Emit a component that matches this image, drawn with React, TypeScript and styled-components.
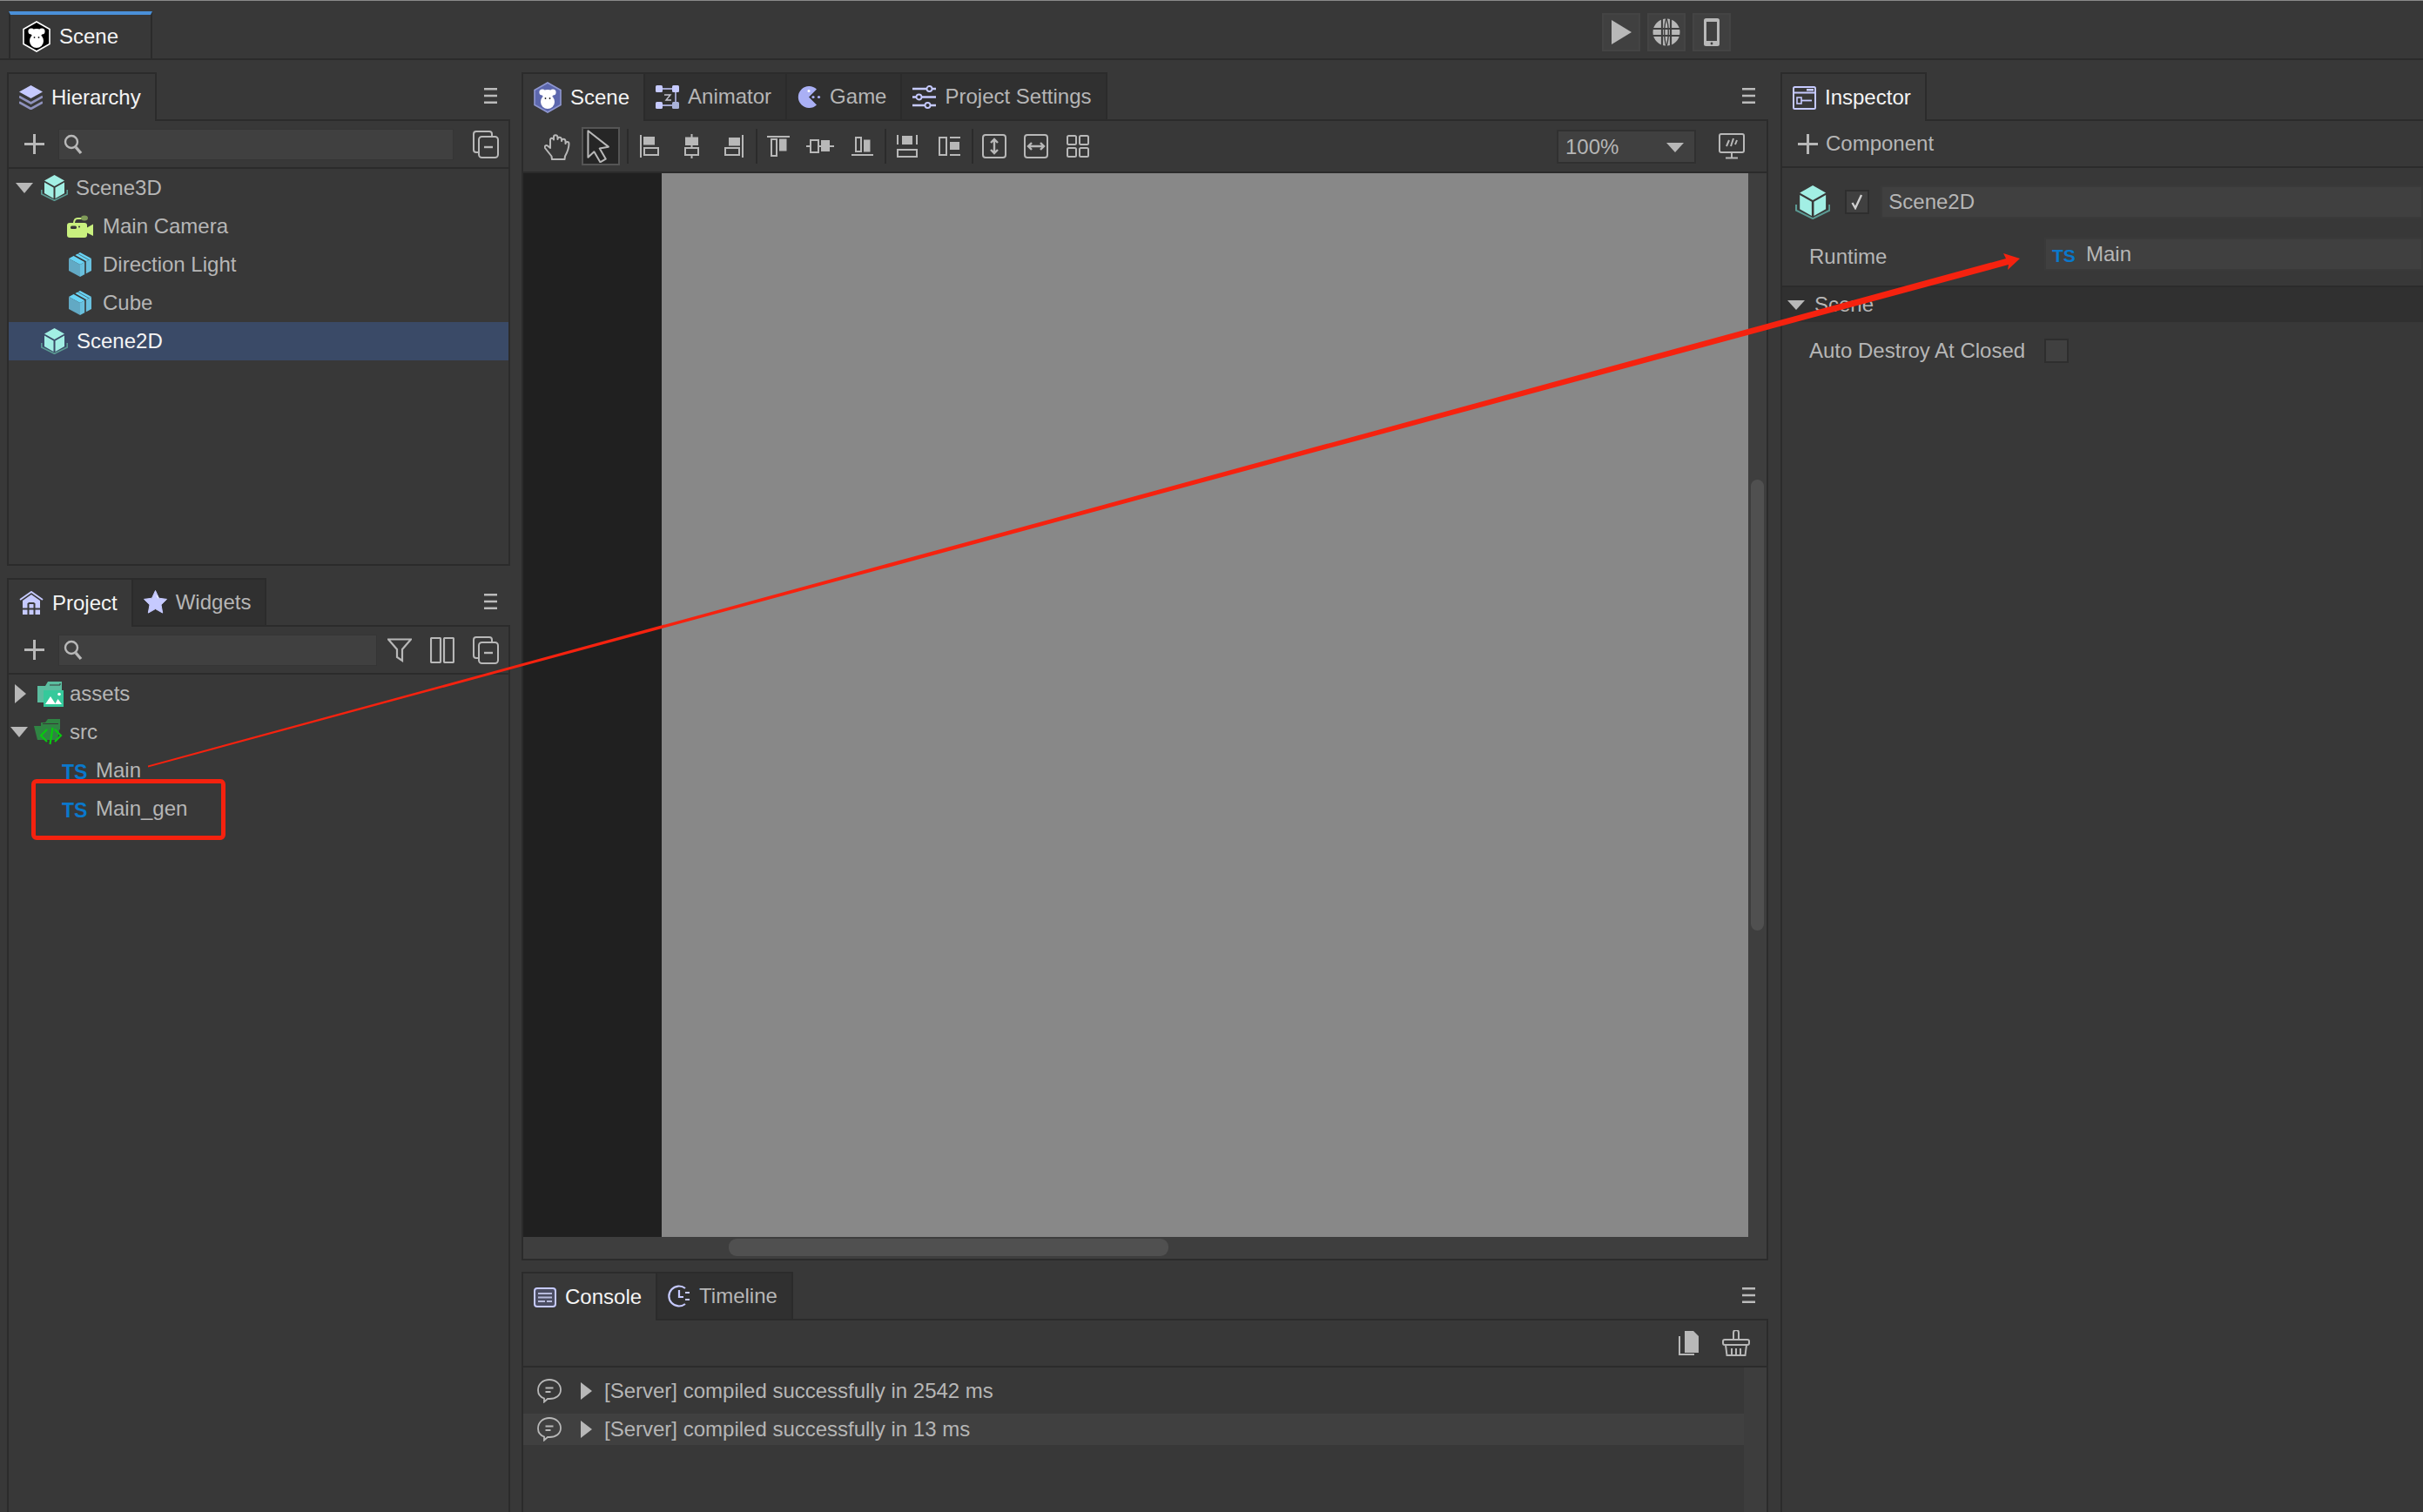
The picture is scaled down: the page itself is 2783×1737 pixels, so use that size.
import React from "react";
import styled, { createGlobalStyle } from "styled-components";

const C = { bg: "#383838", line: "#2b2b2b", text: "#b6b6b6", white: "#f4f4f4", field: "#404040", icon: "#b8b8b8", peri: "#c6caff", tabOff: "#303030" };

const Global = createGlobalStyle`
  html, body { margin: 0; padding: 0; background: ${C.bg}; overflow: hidden; }
  #root { width: 2783px; height: 1737px; }
  * { box-sizing: border-box; }
`;

const Page = styled.div`
  position: relative; width: 2783px; height: 1737px; overflow: hidden; display: flex; flex-direction: column;
  background: ${C.bg}; color: ${C.text}; font: 24px/28px "Liberation Sans", Arial, sans-serif;
  border-top: 1px solid #8a8a8a;
`;
const TopBar = styled.header`
  height: 68px; flex: none; display: flex; align-items: flex-start; padding: 12px 0 0 10px; border-bottom: 2px solid ${C.line};
`;
const DocTab = styled.div`
  width: 165px; height: 54px; display: flex; align-items: center; gap: 10px; padding-left: 14px; color: ${C.white};
  border-left: 2px solid ${C.line}; border-right: 2px solid ${C.line}; border-top: 4px solid #4a90d9;
`;
const PlayGroup = styled.div`display: flex; gap: 8px; margin: 2px 0 0 1665px;`;
const PlayBtn = styled.div`
  width: 44px; height: 44px; display: flex; align-items: center; justify-content: center; background: #404040; border: 2px solid #444;
`;
const Main = styled.main`flex: 1; min-height: 0; display: flex; padding: 14px 0 0 8px; gap: 13px;`;
const LeftCol = styled.div`width: 578px; flex: none; display: flex; flex-direction: column; gap: 14px;`;
const CenterCol = styled.div`width: 1432px; flex: none; display: flex; flex-direction: column; gap: 13px;`;
const RightCol = styled.div`flex: 1; min-width: 0; display: flex; flex-direction: column; margin-left: 1px;`;
const Panel = styled.section<{ $h?: number }>`
  display: flex; flex-direction: column; min-height: 0; ${(p) => (p.$h ? `height: ${p.$h}px; flex: none;` : "flex: 1;")}
`;
const PanelHead = styled.div`height: 54px; flex: none; display: flex; align-items: stretch; position: relative;`;
const PanelBody = styled.div<{ $open?: boolean }>`
  flex: 1; min-height: 0; display: flex; flex-direction: column; border: 2px solid ${C.line};
  ${(p) => (p.$open ? "border-bottom: none;" : "")}
`;
const Tab = styled.div<{ $active?: boolean }>`
  display: flex; align-items: center; gap: 10px; padding: 0 16px 0 12px; white-space: nowrap;
  border: 2px solid ${C.line}; border-bottom: none; position: relative;
  & + & { margin-left: -2px; }
  color: ${(p) => (p.$active ? C.white : C.text)};
  background: ${(p) => (p.$active ? C.bg : C.tabOff)};
  ${(p) => (p.$active ? `z-index: 1; margin-bottom: -2px;` : "")}
`;
const MenuWrap = styled.div`margin-left: auto; margin-right: 15px; align-self: center; display: flex;`;
const ToolRow = styled.div`
  height: 55px; flex: none; display: flex; align-items: center; border-bottom: 2px solid ${C.line}; position: relative;
`;
const PlusSlot = styled.div<{ $w: number }>`width: ${(p) => p.$w}px; display: flex; justify-content: center; flex: none;`;
const Search = styled.div<{ $w: number }>`
  width: ${(p) => p.$w}px; height: 34px; flex: none; display: flex; align-items: center; padding-left: 5px; background: ${C.field};
  box-shadow: 0 0 0 1px #353535;
`;
const ToolEnd = styled.div`margin-left: auto; margin-right: 11px; display: flex; align-items: center; gap: 21px;`;
const Tree = styled.div`display: flex; flex-direction: column; padding-top: 0;`;
const TreeRow = styled.div<{ $indent: number; $gap: number; $sel?: boolean }>`
  height: 44px; flex: none; display: flex; align-items: center; padding-left: ${(p) => p.$indent}px; gap: ${(p) => p.$gap}px;
  ${(p) => (p.$sel ? `background: #3a4a67; color: ${C.white};` : "")}
`;
const TsMark = styled.span<{ $size?: number }>`
  font: bold ${(p) => p.$size ?? 23}px/28px "Liberation Sans", Arial, sans-serif; color: #0a78cc; display: inline-block; width: 29px; position: relative; top: 2px;
`;
const SceneBar = styled(ToolRow)`height: 60px; padding-left: 15px; flex: none;`;
const Slot = styled.div`width: 48px; height: 44px; flex: none; display: flex; align-items: center; justify-content: center;`;
const ActiveSlot = styled.div`
  width: 44px; height: 44px; flex: none; margin: 0 6px 0 4px; display: flex; align-items: center; justify-content: center;
  background: #262626; border: 2px solid #555;
`;
const Sep = styled.div`width: 2px; height: 40px; flex: none; background: ${C.line}; margin-left: 2px;`;
const ZoomBox = styled.div`
  width: 160px; height: 39px; flex: none; margin-left: auto; display: flex; align-items: center; justify-content: space-between;
  padding: 2px 12px 0 8px; background: ${C.field}; border: 2px solid #303030;
`;
const MonitorSlot = styled.div`width: 81px; flex: none; display: flex; justify-content: center; padding-right: 0;`;
const ViewWrap = styled.div`flex: 1; min-height: 0; display: grid; grid-template-columns: 159px 1248px 1fr; grid-template-rows: 1fr 25px;`;
const DarkGutter = styled.div`background: #202020;`;
const Canvas = styled.div`background: #888888;`;
const VTrack = styled.div`grid-row: 1 / 3; grid-column: 3; background: #3e3e3e; padding: 352px 3px 0 3px;`;
const VThumb = styled.div`height: 518px; background: #505050; border-radius: 9px;`;
const HTrack = styled.div`grid-column: 1 / 3; background: #3e3e3e; padding: 2px 0 3px 236px;`;
const HThumb = styled.div`width: 505px; height: 100%; background: #505050; border-radius: 9px;`;
const ConsoleTools = styled(ToolRow)`height: 54px; justify-content: flex-end; padding-right: 19px; gap: 26px;`;
const ConsoleArea = styled.div`flex: 1; display: flex; min-height: 0;`;
const ConsoleList = styled.div`flex: 1; min-width: 0; padding-top: 9px;`;
const ConsoleStrip = styled.div`width: 26px; flex: none; background: #3d3d3d;`;
const LogRow = styled.div<{ $hi?: boolean }>`
  height: 36px; display: flex; align-items: center; padding-left: 16px; gap: 22px; position: relative;
  & + & { margin-top: 8px; }
  background: ${(p) => (p.$hi ? "#404040" : "transparent")};
`;
const LogTail = styled.div`display: flex; align-items: center; gap: 14px;`;
const InspectBody = styled.div`flex: 1; display: flex; flex-direction: column; border-left: 2px solid ${C.line}; border-top: 2px solid ${C.line};`;
const CompRow = styled.div`height: 54px; flex: none; display: flex; align-items: center; gap: 9px; padding-left: 18px; border-bottom: 2px solid ${C.line};`;
const NameRow = styled.div`display: flex; align-items: center; height: 38px; margin-top: 20px; padding-left: 15px;`;
const Check = styled.div<{ $mr?: number }>`
  width: 28px; height: 28px; flex: none; margin-right: ${(p) => p.$mr ?? 0}px; display: flex; align-items: center; justify-content: center;
  background: #404040; border: 2px solid #2e2e2e;
`;
const Field = styled.div`
  flex: 1; min-width: 0; height: 38px; display: flex; align-items: center; padding-left: 7px; gap: 10px; background: ${C.field}; border: 2px solid #3a3a3a;
`;
const PropRow = styled.div`display: flex; align-items: center; height: 39px; margin-top: 21px; padding: 0 0 0 31px;`;
const PropLabel = styled.div`width: 270px; flex: none; position: relative; top: 3px;`;
const Section = styled.div`
  height: 42px; margin-top: 17px; flex: none; display: flex; align-items: center; gap: 11px; padding-left: 6px; background: #303030; border-top: 2px solid ${C.line};
`;
const AutoRow = styled.div`display: flex; align-items: center; height: 28px; margin-top: 19px; padding-left: 31px;`;
const AutoLabel = styled.div`width: 270px; flex: none; white-space: nowrap;`;
const Annot = styled.svg`position: absolute; left: 0; top: 0; pointer-events: none;`;
const RedBox = styled.div`
  position: absolute; left: 36px; top: 894px; width: 223px; height: 70px; border: 5px solid #f5220f; border-radius: 6px; pointer-events: none;
`;

const g = C.icon;
const p = C.peri;

const Tri = ({ dir, w, h, c = g }: { dir: "d" | "r"; w: number; h: number; c?: string }) => (
  <svg width={w} height={h} viewBox="0 0 20 20" preserveAspectRatio="none" style={{ flex: "none" }}>
    <polygon points={dir === "d" ? "0,0 20,0 10,20" : "0,0 20,10 0,20"} fill={c} />
  </svg>
);
const Menu = () => (
  <svg width="15" height="18" viewBox="0 0 15 18"><path d="M0 1.3h15M0 9h15M0 16.7h15" stroke="#bbb" strokeWidth="2.6" /></svg>
);
const Plus = ({ s = 23 }: { s?: number }) => (
  <svg width={s} height={s} viewBox="0 0 23 23"><path d="M11.5 0v23M0 11.5h23" stroke={g} strokeWidth="3" /></svg>
);
const Mag = () => (
  <svg width="22" height="24" viewBox="0 0 22 24" fill="none" stroke={g}>
    <circle cx="9" cy="9" r="7" strokeWidth="2.4" /><path d="M14 15l6 7" strokeWidth="3.4" />
  </svg>
);
const Collapse = () => (
  <svg width="30" height="32" viewBox="0 0 30 32" fill="none" stroke={g} strokeWidth="2">
    <path d="M6 25H4a3 3 0 0 1-3-3V4a3 3 0 0 1 3-3h15a3 3 0 0 1 3 3v3" />
    <rect x="7" y="7" width="22" height="24" rx="3.5" /><path d="M13 19h10" strokeWidth="2.4" />
  </svg>
);
const Filter = () => (
  <svg width="28" height="28" viewBox="0 0 28 28" fill="none" stroke={g} strokeWidth="2.2">
    <path d="M1 1.5h26L17 13v13l-6-4v-9z" />
  </svg>
);
const Columns = () => (
  <svg width="28" height="30" viewBox="0 0 28 30" fill="none" stroke={g} strokeWidth="2.2">
    <rect x="1" y="1" width="11" height="28" rx="1" /><rect x="16" y="1" width="11" height="28" rx="1" />
  </svg>
);
const Monkey = ({ hex, line }: { hex: string; line: string }) => (
  <svg width="32" height="36" viewBox="0 0 32 36" style={{ flex: "none" }}>
    <polygon points="16,1 31,9.5 31,26.5 16,35 1,26.5 1,9.5" fill={hex} stroke={line} strokeWidth="1.6" />
    <circle cx="10" cy="12" r="3.6" fill="#fff" /><circle cx="22" cy="12" r="3.6" fill="#fff" />
    <ellipse cx="16" cy="14" rx="6.5" ry="5" fill="#fff" /><ellipse cx="16" cy="23" rx="8" ry="8" fill="#fff" />
    <circle cx="13.5" cy="19" r=".9" fill="#222" /><circle cx="18.5" cy="19" r=".9" fill="#222" />
  </svg>
);
const Layers = () => (
  <svg width="27" height="28" viewBox="0 0 27 28">
    <path d="M13.5 0L27 7.5 13.5 15 0 7.5z" fill={p} />
    <path d="M0 13l13.5 7.5L27 13M0 19.5L13.5 27 27 19.5" fill="none" stroke="#8f92bd" strokeWidth="2.6" />
  </svg>
);
const Home = () => (
  <svg width="28" height="28" viewBox="0 0 28 28">
    <path d="M1 10L14 1l13 9" fill="none" stroke={p} strokeWidth="2" />
    <path d="M4 11l10-7 10 7v16H4z" fill={p} />
    <path d="M10.5 14v13M17.5 14v13M4 20.5h20M10.5 14h7" stroke="#383838" strokeWidth="2" fill="none" />
  </svg>
);
const Star = () => (
  <svg width="27" height="28" viewBox="0 0 27 28">
    <path d="M13.5 0.5l4 8.7 9 1.2-6.5 6.4 1.7 9.3-8.2-4.6-8.2 4.6L7 16.8.5 10.4l9-1.2z" fill={p} stroke={p} strokeLinejoin="round" />
    <path d="M15 6l2 3.5" stroke="#fff" strokeWidth="1" />
  </svg>
);
const Animator = () => (
  <svg width="27" height="27" viewBox="0 0 27 27">
    <rect x="0" y="0" width="8" height="8" rx="1.5" fill={p} /><rect x="19" y="0" width="8" height="8" rx="1.5" fill={p} />
    <rect x="0" y="19" width="8" height="8" rx="1.5" fill={p} /><rect x="19" y="19" width="8" height="8" rx="1.5" fill="#aab3d8" />
    <path d="M8 4h11M8 23h11M23 8v11" stroke={p} strokeWidth="1.4" />
    <path d="M10 11h7l-5 6h6" fill="none" stroke="#c4c4d0" strokeWidth="1.4" />
  </svg>
);
const Pac = () => (
  <svg width="27" height="27" viewBox="0 0 27 27">
    <path d="M22 4.5A12.5 12.5 0 1 0 22 22.5L13 13.5z" fill="#aab0f5" />
    <circle cx="13" cy="6.5" r="1.5" fill="#fff" /><circle cx="18" cy="13.5" r="1.6" fill="#aab0f5" /><circle cx="24.5" cy="13.5" r="1.6" fill="#aab0f5" />
  </svg>
);
const Sliders = () => (
  <svg width="27" height="27" viewBox="0 0 27 27" fill="none" stroke={p} strokeWidth="2.4">
    <path d="M0 4h16M23 4h4M0 13.5h4M11 13.5h16M0 23h14M21 23h6" /><circle cx="19.5" cy="4" r="3" strokeWidth="1.8" /><circle cx="7.5" cy="13.5" r="3" strokeWidth="1.8" /><circle cx="17.5" cy="23" r="3" strokeWidth="1.8" />
  </svg>
);
const InspectIco = () => (
  <svg width="27" height="27" viewBox="0 0 27 27" fill="none">
    <rect x="1" y="1" width="25" height="25" rx="1.5" stroke={p} strokeWidth="2" /><path d="M1 7.5h25" stroke={p} strokeWidth="2" />
    <path d="M16 3h8v2.5h-8z" fill={p} /><rect x="5" y="13" width="5" height="7" stroke={p} strokeWidth="1.6" /><path d="M10 16.5h12" stroke={p} strokeWidth="1.8" />
  </svg>
);
const ConsoleIco = () => (
  <svg width="26" height="23" viewBox="0 0 26 23">
    <rect x="1" y="1" width="24" height="21" rx="3" fill="#4b4d62" stroke={p} strokeWidth="2" />
    <path d="M5 7h16M5 11.5h16M5 16h8M15 16h6" stroke="#b8bbdc" strokeWidth="2" />
  </svg>
);
const Clock = () => (
  <svg width="26" height="26" viewBox="0 0 26 26" fill="none" stroke={p} strokeWidth="2.2">
    <path d="M20 4A11.5 11.5 0 1 0 20 22" /><path d="M13 6v8h5M20 9h5M20 17h5" />
  </svg>
);
const Cube = ({ s = 1 }: { s?: number }) => (
  <svg width={31 * s} height={30 * s} viewBox="0 0 31 30" style={{ flex: "none" }}>
    <polygon points="15.5,0 27,6.5 15.5,13 4,6.5" fill="#a2efe4" />
    <polygon points="4,8.5 14.5,14.5 14.5,27 4,21" fill="#a2efe4" /><polygon points="27,8.5 16.5,14.5 16.5,27 27,21" fill="#a2efe4" />
    <polyline points="0.8,17 0.8,22 15.5,29.3 30.2,22 30.2,17" fill="none" stroke="#5b9a93" strokeWidth="1.6" />
  </svg>
);
const Box = () => (
  <svg width="26" height="28" viewBox="0 0 26 28" style={{ flex: "none" }}>
    <polygon points="13,0 26,7 13,14 0,7" fill="#69d4f5" /><polygon points="0,7 13,14 13,28 0,21" fill="#62a9c4" /><polygon points="26,7 13,14 13,28 26,21" fill="#69c0de" />
    <path d="M6 3.2L19 10.5V25" fill="none" stroke="#383838" strokeWidth="1.6" /><path d="M10 1.2l13 7.3" stroke="#383838" strokeWidth=".6" />
  </svg>
);
const Camera = () => (
  <svg width="30" height="27" viewBox="0 0 30 27" style={{ flex: "none" }}>
    <rect x="0" y="9" width="23" height="17" rx="3" fill="#c9f07f" /><polygon points="22,15 30,10.5 30,24 22,20" fill="#c9f07f" />
    <path d="M8 10c0-4 1-6 4-6h5" fill="none" stroke="#c9f07f" strokeWidth="2" /><ellipse cx="20" cy="3.5" rx="4" ry="3" fill="#7f9a58" />
    <rect x="4" y="12.5" width="7" height="3.6" rx="1.6" fill="#383838" /><circle cx="14" cy="13.5" r="1" fill="#383838" />
  </svg>
);
const AssetsFolder = () => (
  <svg width="30" height="29" viewBox="0 0 30 29" style={{ flex: "none" }}>
    <path d="M0 5h9l3-5h16v11H7v13H0z" fill="#5bbd9f" />
    <path d="M26 2v2h-12" stroke="#383838" strokeWidth="1" fill="none" />
    <rect x="7" y="10" width="23" height="19" fill="#35c99b" /><path d="M9 26l6-9 6 9z" fill="#fff" /><path d="M20 26l3.500-6 4.500 6z" fill="#fff" /><circle cx="25" cy="14.500" r="1.800" fill="#fff" />
  </svg>
);
const SrcFolder = () => (
  <svg width="34" height="30" viewBox="0 0 34 30" style={{ flex: "none" }}>
    <path d="M8 4h5l3-4h14v12H8z" fill="#2f8443" /><path d="M10 5.500h18" stroke="#383838" strokeWidth="1" />
    <path d="M0 8h28l2 0-3 16H4z" fill="#2f8443" />
    <path d="M15 12l-7 7 7 7M24 12l7 7-7 7M21.500 10l-3 19" fill="none" stroke="#08c90f" strokeWidth="2.200" />
  </svg>
);
const Hand = () => (
  <svg width="31" height="32" viewBox="0 0 31 32" fill="none" stroke={g} strokeWidth="2" strokeLinejoin="round">
    <path d="M9 31l-.5-3.500L1 18c-1-2 1-4 3-2.500L7 18V9c0-3 3.500-3 4-.5V5.500c0-3 4-3 4.500 0V8c0-3 4-3 4.500 0v2c.5-3 4-3 4.500 0l0 3c.5-3 4-2.500 4 0 0 5.500-2 10-4.500 14.500l-.5 3.500z" />
  </svg>
);
const Pointer = () => (
  <svg width="38" height="38" viewBox="3 2 30 30" fill="none" stroke={g} strokeWidth="1.600" strokeLinejoin="round">
    <path d="M6.500 3v24l5.500-5 5.500 9.500 5-3-5.500-9.500 8-1.500z" />
  </svg>
);
type AP = { kind: string };
const Align = ({ kind }: AP) => {
  const f = { fill: g };
  const o = { fill: "none", stroke: g, strokeWidth: 2 };
  const l = { stroke: g, strokeWidth: 2 };
  if (kind === "left") return <svg width="23" height="26" viewBox="0 0 23 26"><path d="M1 0v26" {...l} /><rect x="4" y="2" width="13" height="9.500" {...f} /><rect x="5" y="15" width="16" height="8" {...o} /></svg>;
  if (kind === "cx") return <svg width="17" height="28" viewBox="0 0 17 28"><path d="M8.500 0v28" {...l} /><rect x="1" y="3.500" width="15" height="9.500" {...f} /><rect x="1" y="16" width="15" height="8" fill="#383838" stroke={g} strokeWidth="2" /></svg>;
  if (kind === "right") return <svg width="23" height="26" viewBox="0 0 23 26"><path d="M22 0v26" {...l} /><rect x="6" y="3" width="13" height="9.500" {...f} /><rect x="2" y="15" width="16" height="8" {...o} /></svg>;
  if (kind === "top") return <svg width="26" height="24" viewBox="0 0 26 24"><path d="M0 1h26" {...l} /><rect x="5" y="4" width="6" height="19" {...o} /><rect x="14" y="3.500" width="8.500" height="14" {...f} /></svg>;
  if (kind === "cy") return <svg width="32" height="16" viewBox="0 0 32 16"><path d="M0 8h32" {...l} /><rect x="5" y="1" width="9" height="14" fill="#383838" stroke={g} strokeWidth="2" /><rect x="17" y="1" width="10" height="13" {...f} /></svg>;
  if (kind === "bottom") return <svg width="25" height="22" viewBox="0 0 25 22"><path d="M0 21h25" {...l} /><rect x="5" y="1" width="6" height="16" {...o} /><rect x="14" y="3.500" width="7.500" height="14" {...f} /></svg>;
  if (kind === "dv") return <svg width="24" height="26" viewBox="0 0 24 26"><path d="M1 0v11M23 0v11" {...l} /><rect x="6" y="1" width="12" height="10" {...f} /><rect x="1" y="17" width="22" height="8" {...o} /></svg>;
  if (kind === "dh") return <svg width="25" height="22" viewBox="0 0 25 22"><rect x="1" y="1" width="8" height="20" {...o} /><path d="M13 1h12M13 21h12" {...l} /><rect x="13" y="6" width="11" height="9" {...f} /></svg>;
  if (kind === "ev") return <svg width="28" height="28" viewBox="0 0 28 28" fill="none" stroke={g} strokeWidth="2"><rect x="1" y="1" width="26" height="26" rx="3" /><path d="M14 6v16M10 10l4-4 4 4M10 18l4 4 4-4" strokeWidth="2.400" /></svg>;
  if (kind === "eh") return <svg width="28" height="28" viewBox="0 0 28 28" fill="none" stroke={g} strokeWidth="2"><rect x="1" y="1" width="26" height="26" rx="3" /><path d="M5 14h18M9 10l-4 4 4 4M19 10l4 4-4 4" strokeWidth="2.400" /></svg>;
  return <svg width="26" height="26" viewBox="0 0 26 26" fill="none" stroke={g} strokeWidth="2"><rect x="1" y="1" width="10" height="10" rx="1.500" /><rect x="15" y="1" width="10" height="10" rx="1.500" /><rect x="1" y="15" width="10" height="10" rx="1.500" /><rect x="15" y="15" width="10" height="10" rx="1.500" /></svg>;
};
const Monitor = () => (
  <svg width="30" height="30" viewBox="0 0 30 30" fill="none" stroke={g} strokeWidth="2">
    <rect x="1" y="1" width="28" height="21" rx="2" /><path d="M9 15l3-7M14 15l3-9M19 13l2-5M15 22v6M8 28.500h14" />
  </svg>
);
const Globe = () => (
  <svg width="32" height="32" viewBox="0 0 32 32">
    <circle cx="16" cy="16" r="15.500" fill={g} />
    <path d="M0 12h32M0 20h32M11 0v32M21 0v32" stroke="#404040" strokeWidth="2.200" />
    <path d="M16 0c-3 8-3 24 0 32M16 0c3 8 3 24 0 32" fill="none" stroke="#404040" strokeWidth="1.400" />
  </svg>
);
const Phone = () => (
  <svg width="20" height="32" viewBox="0 0 20 32"><rect x="1" y="0" width="18" height="32" rx="2.500" fill={g} /><rect x="4" y="4" width="12" height="22" fill="#404040" /><circle cx="10" cy="29" r="1.400" fill="#404040" /></svg>
);
const Play = () => (
  <svg width="24" height="28" viewBox="0 0 24 28"><polygon points="1,0 24,14 1,28" fill={g} /></svg>
);
const Bubble = () => (
  <svg width="28" height="28" viewBox="0 0 28 28" fill="none" stroke={g} strokeWidth="1.800">
    <path d="M8 22.500C3.500 21 1 17.500 1 13 1 6 6.500 1 14 1s13 5 13 11.500S21.500 23 14 23c-1 0-1.500 0-2 0l-4 3.500z" />
    <path d="M9.500 10.500h9M9.500 15h6" strokeWidth="1.800" />
  </svg>
);
const Doc = () => (
  <svg width="24" height="28" viewBox="0 0 24 28"><path d="M7 0h10l6 6v19H7z" fill={g} /><path d="M1 6v21h17" fill="none" stroke={g} strokeWidth="2" /></svg>
);
const Broom = () => (
  <svg width="32" height="30" viewBox="0 0 32 30" fill="none" stroke={g} strokeWidth="2">
    <path d="M13 11V3a3 3 0 0 1 6 0v8" /><rect x="1" y="11" width="30" height="6" rx="2" />
    <path d="M4 17l1.500 12h21L28 17M11 21v8M16 21v8M21 21v8" />
  </svg>
);
const Tick = () => (
  <svg width="14" height="18" viewBox="0 0 14 18" fill="none" stroke="#d0d0d0" strokeWidth="2.400"><path d="M1.500 10l3.500 6L12 1" /></svg>
);

const TopAlign = ["left", "cx", "right"];
const MidAlign = ["top", "cy", "bottom"];

export default function App() {
  return (
    <Page>
      <Global />
      <TopBar>
        <DocTab><Monkey hex="#000" line="#fff" /><span>Scene</span></DocTab>
        <PlayGroup>
          <PlayBtn><Play /></PlayBtn>
          <PlayBtn><Globe /></PlayBtn>
          <PlayBtn><Phone /></PlayBtn>
        </PlayGroup>
      </TopBar>
      <Main>
        <LeftCol>
          <Panel $h={567}>
            <PanelHead>
              <Tab $active><Layers />Hierarchy</Tab>
              <MenuWrap><Menu /></MenuWrap>
            </PanelHead>
            <PanelBody>
              <ToolRow>
                <PlusSlot $w={58}><Plus /></PlusSlot>
                <Search $w={452}><Mag /></Search>
                <ToolEnd><Collapse /></ToolEnd>
              </ToolRow>
              <Tree>
                <TreeRow $indent={8} $gap={9}><Tri dir="d" w={20} h={12} /><Cube /><span>Scene3D</span></TreeRow>
                <TreeRow $indent={67} $gap={11}><Camera /><span>Main Camera</span></TreeRow>
                <TreeRow $indent={69} $gap={13}><Box /><span>Direction Light</span></TreeRow>
                <TreeRow $indent={69} $gap={13}><Box /><span>Cube</span></TreeRow>
                <TreeRow $indent={37} $gap={10} $sel><Cube /><span>Scene2D</span></TreeRow>
              </Tree>
            </PanelBody>
          </Panel>
          <Panel>
            <PanelHead>
              <Tab $active><Home />Project</Tab>
              <Tab><Star />Widgets</Tab>
              <MenuWrap><Menu /></MenuWrap>
            </PanelHead>
            <PanelBody $open>
              <ToolRow>
                <PlusSlot $w={58}><Plus /></PlusSlot>
                <Search $w={364}><Mag /></Search>
                <ToolEnd><Filter /><Columns /><Collapse /></ToolEnd>
              </ToolRow>
              <Tree>
                <TreeRow $indent={7} $gap={13}><Tri dir="r" w={13} h={22} /><AssetsFolder /><span style={{ marginLeft: -6 }}>assets</span></TreeRow>
                <TreeRow $indent={2} $gap={7}><Tri dir="d" w={20} h={12} /><SrcFolder /><span>src</span></TreeRow>
                <TreeRow $indent={61} $gap={10}><TsMark>TS</TsMark><span>Main</span></TreeRow>
                <TreeRow $indent={61} $gap={10}><TsMark>TS</TsMark><span>Main_gen</span></TreeRow>
              </Tree>
            </PanelBody>
          </Panel>
        </LeftCol>

        <CenterCol>
          <Panel $h={1365}>
            <PanelHead>
              <Tab $active><Monkey hex="#5c67ad" line="#8f97d0" />Scene</Tab>
              <Tab><Animator />Animator</Tab>
              <Tab><Pac />Game</Tab>
              <Tab><Sliders />Project Settings</Tab>
              <MenuWrap><Menu /></MenuWrap>
            </PanelHead>
            <PanelBody>
              <SceneBar>
                <Slot><Hand /></Slot>
                <ActiveSlot><Pointer /></ActiveSlot>
                <Sep />
                {TopAlign.map((k) => <Slot key={k}><Align kind={k} /></Slot>)}
                <Sep />
                {MidAlign.map((k) => <Slot key={k}><Align kind={k} /></Slot>)}
                <Sep />
                <Slot><Align kind="dv" /></Slot>
                <Slot><Align kind="dh" /></Slot>
                <Sep />
                <Slot><Align kind="ev" /></Slot>
                <Slot><Align kind="eh" /></Slot>
                <Slot><Align kind="grid" /></Slot>
                <ZoomBox><span>100%</span><Tri dir="d" w={20} h={11} /></ZoomBox>
                <MonitorSlot><Monitor /></MonitorSlot>
              </SceneBar>
              <ViewWrap>
                <DarkGutter />
                <Canvas />
                <VTrack><VThumb /></VTrack>
                <HTrack><HThumb /></HTrack>
              </ViewWrap>
            </PanelBody>
          </Panel>
          <Panel>
            <PanelHead>
              <Tab $active><ConsoleIco />Console</Tab>
              <Tab><Clock />Timeline</Tab>
              <MenuWrap><Menu /></MenuWrap>
            </PanelHead>
            <PanelBody $open>
              <ConsoleTools><Doc /><Broom /></ConsoleTools>
              <ConsoleArea>
                <ConsoleList>
                  <LogRow><Bubble /><LogTail><Tri dir="r" w={13} h={20} /><span>[Server] compiled successfully in 2542 ms</span></LogTail></LogRow>
                  <LogRow $hi><Bubble /><LogTail><Tri dir="r" w={13} h={20} /><span>[Server] compiled successfully in 13 ms</span></LogTail></LogRow>
                </ConsoleList>
                <ConsoleStrip />
              </ConsoleArea>
            </PanelBody>
          </Panel>
        </CenterCol>

        <RightCol>
          <PanelHead>
            <Tab $active><InspectIco />Inspector</Tab>
          </PanelHead>
          <InspectBody>
            <CompRow><Plus /><span>Component</span></CompRow>
            <NameRow>
              <Cube s={1.3} />
              <Check $mr={13} style={{ marginLeft: 17 }}><Tick /></Check>
              <Field>Scene2D</Field>
            </NameRow>
            <PropRow>
              <PropLabel>Runtime</PropLabel>
              <Field><TsMark $size={21}>TS</TsMark>Main</Field>
            </PropRow>
            <Section><Tri dir="d" w={20} h={11} /><span>Scene</span></Section>
            <AutoRow>
              <AutoLabel>Auto Destroy At Closed</AutoLabel>
              <Check />
            </AutoRow>
          </InspectBody>
        </RightCol>
      </Main>
      <RedBox />
      <Annot width="2783" height="1737" viewBox="0 0 2783 1737">
        <polygon points="170,878.500 2304,296 2301,290 2320,296 2306,309 2307,303 170,880.500" fill="#f5220f" />
      </Annot>
    </Page>
  );
}
